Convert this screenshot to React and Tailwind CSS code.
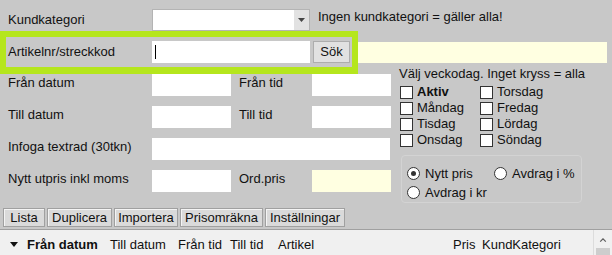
import React from 'react'

function Checkbox({ label, bold }) {
  return (
    <div className="flex h-[16px] items-center">
      <span className="h-[13px] w-[13px] border border-[#333] bg-white" />
      <span className={`ml-[4px] ${bold ? "font-bold" : ""}`}>{label}</span>
    </div>
  )
}

function Radio({ label, checked, width }) {
  return (
    <div className={`flex h-[19px] items-center ${width}`}>
      <span className="flex h-[13px] w-[13px] items-center justify-center rounded-full border border-[#333] bg-white">
        {checked && <span className="h-[5px] w-[5px] rounded-full bg-[#333]" />}
      </span>
      <span className="ml-[5px]">{label}</span>
    </div>
  )
}

function App() {
  const tabs = [
    { name: "Lista", w: "w-[42px]" },
    { name: "Duplicera", w: "w-[65px]" },
    { name: "Importera", w: "w-[64px]" },
    { name: "Prisomräkna", w: "w-[83px]" },
    { name: "Inställningar", w: "w-[80px]" },
  ]

  return (
    <div className="h-[255px] w-[612px] overflow-hidden bg-[#c8c8c8] font-['Liberation_Sans',Arial,sans-serif] text-[13px] leading-[16px] text-[#111]">
      {/* kundkategori */}
      <div className="flex pt-[9px]">
        <div className="flex h-[22px] w-[152px] items-center pl-[8px]">Kundkategori</div>
        <div className="flex h-[22px] w-[158px] border border-[#b4b4b4] bg-white">
          <div className="flex-1" />
          <div className="flex w-[15px] items-center justify-center bg-[#e2e2e2]">
            <svg width="7" height="4" viewBox="0 0 7 4"><polygon points="0,0 7,0 3.5,4" fill="#444" /></svg>
          </div>
        </div>
        <div className="ml-[8px] pt-[0px]">Ingen kundkategori = gäller alla!</div>
      </div>

      {/* artikelnr */}
      <div className="flex items-center">
        <div className="flex h-[43px] w-[358px] items-center border-[6px] border-b-[7px] border-[#b5e61d]">
          <div className="w-[146px] pl-[2px]">Artikelnr/streckkod</div>
          <div className="flex h-[22px] w-[158px] items-center bg-white">
            <span className="ml-[3px] h-[14px] w-px bg-black" />
          </div>
          <button className="ml-[3px] h-[22px] w-[37px] border border-[#adadad] bg-[#e1e1e1] text-[13px]">Sök</button>
        </div>
        <div className="-mt-[1px] h-[21px] w-[249px] bg-[#ffffe1]" />
      </div>

      <div className="flex">
        {/* left fields */}
        <div className="flex w-[399px] flex-col gap-[10px] pt-0">
          <div className="flex h-[22px]">
            <div className="w-[152px] pl-[8px] pt-[1px]">Från datum</div>
            <div className="w-[79px] bg-white" />
            <div className="w-[81px] pl-[8px] pt-[1px]">Från tid</div>
            <div className="w-[79px] bg-white" />
          </div>
          <div className="flex h-[22px]">
            <div className="w-[152px] pl-[8px] pt-[1px]">Till datum</div>
            <div className="w-[79px] bg-white" />
            <div className="w-[81px] pl-[8px] pt-[1px]">Till tid</div>
            <div className="w-[79px] bg-white" />
          </div>
          <div className="flex h-[22px]">
            <div className="w-[152px] pl-[8px] pt-[1px]">Infoga textrad (30tkn)</div>
            <div className="w-[238px] bg-white" />
          </div>
          <div className="flex h-[22px]">
            <div className="w-[152px] pl-[8px] pt-[1px]">Nytt utpris inkl moms</div>
            <div className="w-[79px] bg-white" />
            <div className="w-[81px] pl-[8px] pt-[1px]">Ord.pris</div>
            <div className="w-[79px] bg-[#ffffe1]" />
          </div>
        </div>

        {/* weekdays + price type */}
        <div className="-mt-[8px] flex flex-col">
          <div className="h-[16px]">Välj veckodag. Inget kryss = alla</div>
          <div className="ml-[1px] mt-[2px] grid grid-cols-[80px_auto]">
            <Checkbox label="Aktiv" bold />
            <Checkbox label="Torsdag" />
            <Checkbox label="Måndag" />
            <Checkbox label="Fredag" />
            <Checkbox label="Tisdag" />
            <Checkbox label="Lördag" />
            <Checkbox label="Onsdag" />
            <Checkbox label="Söndag" />
          </div>
          <div className="ml-[2px] mt-[7px] h-[48px] w-[181px] rounded-[4px] border border-[#d3d3d3] pl-[5px] pt-[8px]">
            <div className="flex">
              <Radio label="Nytt pris" checked width="w-[87px]" />
              <Radio label="Avdrag i %" />
            </div>
            <Radio label="Avdrag i kr" />
          </div>
        </div>
      </div>

      {/* tabs */}
      <div className="mt-[5px] flex h-[22px] items-start gap-[2px] border-b border-[#a0a0a0] pl-[3px]">
        {tabs.map((t) => (
          <div
            key={t.name}
            className={`flex h-[19px] items-center justify-center border border-[#a0a0a0] bg-[#dadada] shadow-[inset_1px_1px_0_#f4f4f4] ${t.w}`}
          >
            {t.name}
          </div>
        ))}
      </div>

      {/* list header */}
      <div className="flex h-[26px] bg-[#f0f0f0]">
        <div className="flex flex-1 items-start pl-[10px] pt-[7px]">
          <span className="flex w-[17px] pt-[5px]">
            <svg width="8" height="5" viewBox="0 0 8 5"><polygon points="0,0 8,0 4,5" fill="#111" /></svg>
          </span>
          <span className="w-[83px] font-bold">Från datum</span>
          <span className="w-[68px]">Till datum</span>
          <span className="w-[52px]">Från tid</span>
          <span className="w-[48px]">Till tid</span>
          <span className="w-[175px]">Artikel</span>
          <span className="w-[29px]">Pris</span>
          <span>KundKategori</span>
        </div>
        <div className="flex w-[19px] flex-col items-center border-l border-[#dcdcdc] bg-[#f0f0f0]">
          <svg className="mt-[8px]" width="8" height="5" viewBox="0 0 8 5">
            <polyline points="0.5,4.5 4,1 7.5,4.5" fill="none" stroke="#606060" strokeWidth="1.5" />
          </svg>
          <div className="mt-[6px] h-[10px] w-[14px] bg-[#cdcdcd]" />
        </div>
      </div>
    </div>
  )
}

export default App
